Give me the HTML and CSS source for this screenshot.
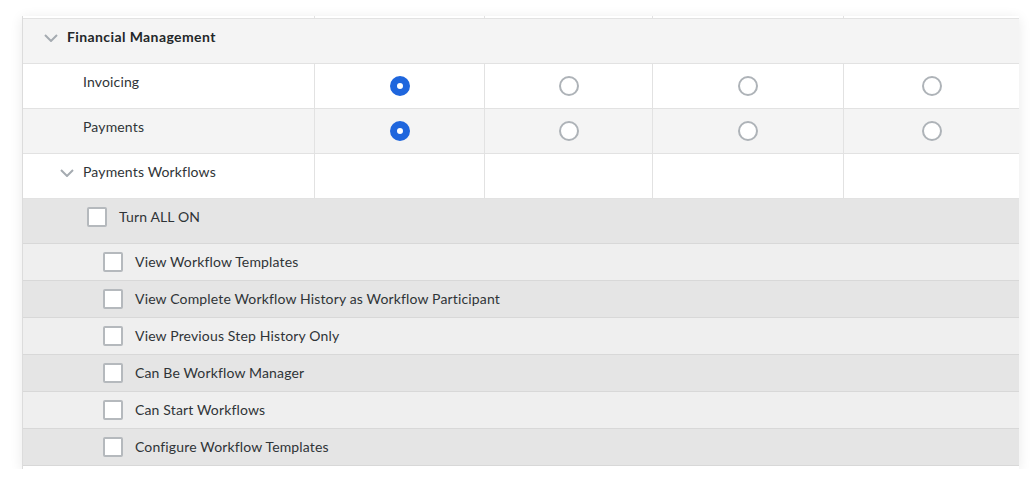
FILE: index.html
```html
<!DOCTYPE html>
<html>
<head>
<meta charset="utf-8">
<link rel="stylesheet" href="styles.css">
</head>
<body>
<div class="card">
  <div class="row stub">
    <div class="cell c1"></div><div class="cell"></div><div class="cell"></div><div class="cell"></div><div class="cell last"></div>
  </div>

  <div class="row section">
    <div class="label bold">
      <svg class="chev" width="14" height="8" viewBox="0 0 14 8"><polyline points="1,1 7,7 13,1" fill="none" stroke="#a5abb1" stroke-width="2"/></svg>
      Financial Management
    </div>
  </div>

  <div class="row tool white">
    <div class="cell c1"><span class="name">Invoicing</span></div>
    <div class="cell center"><span class="radio on"></span></div>
    <div class="cell center"><span class="radio"></span></div>
    <div class="cell center"><span class="radio"></span></div>
    <div class="cell center last"><span class="radio"></span></div>
  </div>

  <div class="row tool grey">
    <div class="cell c1"><span class="name">Payments</span></div>
    <div class="cell center"><span class="radio on"></span></div>
    <div class="cell center"><span class="radio"></span></div>
    <div class="cell center"><span class="radio"></span></div>
    <div class="cell center last"><span class="radio"></span></div>
  </div>

  <div class="row tool white">
    <div class="cell c1 sub">
      <svg class="chev small" width="14" height="8" viewBox="0 0 14 8"><polyline points="1,1 7,7 13,1" fill="none" stroke="#a5abb1" stroke-width="2"/></svg>
      <span>Payments Workflows</span>
    </div>
    <div class="cell"></div><div class="cell"></div><div class="cell"></div><div class="cell last"></div>
  </div>

  <div class="row allon">
    <span class="box"></span><span>Turn ALL ON</span>
  </div>

  <div class="perm light"><span class="box"></span><span>View Workflow Templates</span></div>
  <div class="perm dark"><span class="box"></span><span>View Complete Workflow History as Workflow Participant</span></div>
  <div class="perm light"><span class="box"></span><span>View Previous Step History Only</span></div>
  <div class="perm dark"><span class="box"></span><span>Can Be Workflow Manager</span></div>
  <div class="perm light"><span class="box"></span><span>Can Start Workflows</span></div>
  <div class="perm dark"><span class="box"></span><span>Configure Workflow Templates</span></div>
  <div class="tail"></div>
</div>
</body>
</html>
```

FILE: styles.css
```css
html, body {
  margin: 0;
  padding: 0;
  background: #ffffff;
}
body {
  font-family: Lato, "Open Sans", Arial, sans-serif;
  font-size: 14px;
  letter-spacing: 0.15px;
  color: #2f3437;
}
.card {
  margin: 16px 0 0 22px;
  width: 996px;
  background: #ffffff;
  border-left: 1px solid #dcdcdc;
  box-shadow: 0 2px 12px rgba(0, 0, 0, 0.09);
}
.row {
  display: grid;
  grid-template-columns: 292px 170px 168px 191px 175px;
  border-bottom: 1px solid #e2e2e2;
}
.cell {
  border-right: 1px solid #e2e2e2;
}
.cell.last {
  border-right: none;
}
.stub {
  height: 2px;
}
.section {
  display: flex;
  height: 44px;
  background: #f4f4f4;
}
.label {
  display: flex;
  align-items: center;
  height: 20px;
  margin-top: 8px;
  padding-left: 21px;
  line-height: 20px;
}
.bold {
  font-weight: 700;
  letter-spacing: 0.4px;
  color: #232729;
}
.chev {
  margin-right: 9px;
  margin-top: 1px;
}
.tool {
  height: 44px;
}
.white { background: #ffffff; }
.grey { background: #f4f4f4; }
.name {
  display: block;
  padding: 8px 0 0 60px;
  line-height: 20px;
}
.sub {
  display: flex;
  align-items: flex-start;
  padding: 8px 0 0 37px;
  line-height: 20px;
}
.sub .chev {
  margin-top: 7px;
  margin-right: 9px;
}
.center {
  display: flex;
  align-items: center;
  justify-content: center;
}
.radio {
  box-sizing: border-box;
  width: 20px;
  height: 20px;
  border-radius: 50%;
  border: 2px solid #aeb3b8;
  background: #ffffff;
}
.radio.on {
  border: 7px solid #1f66dd;
}
.allon {
  display: flex;
  align-items: center;
  height: 45px;
  box-sizing: border-box;
  padding: 0 0 9px 64px;
  background: #e5e5e5;
  border-bottom: 1px solid #d8d8d8;
}
.box {
  box-sizing: border-box;
  width: 20px;
  height: 20px;
  border: 2px solid #b5b9bd;
  border-radius: 2px;
  background: #ffffff;
  margin-right: 12px;
  flex: none;
}
.perm {
  display: flex;
  align-items: center;
  height: 36px;
  box-sizing: border-box;
  padding: 0 0 1px 80px;
  border-bottom: 1px solid #d8d8d8;
}
.perm {
  height: 37px;
}
.perm.light { background: #efefef; }
.perm.dark { background: #e5e5e5; }
.tail {
  height: 3px;
}
```
